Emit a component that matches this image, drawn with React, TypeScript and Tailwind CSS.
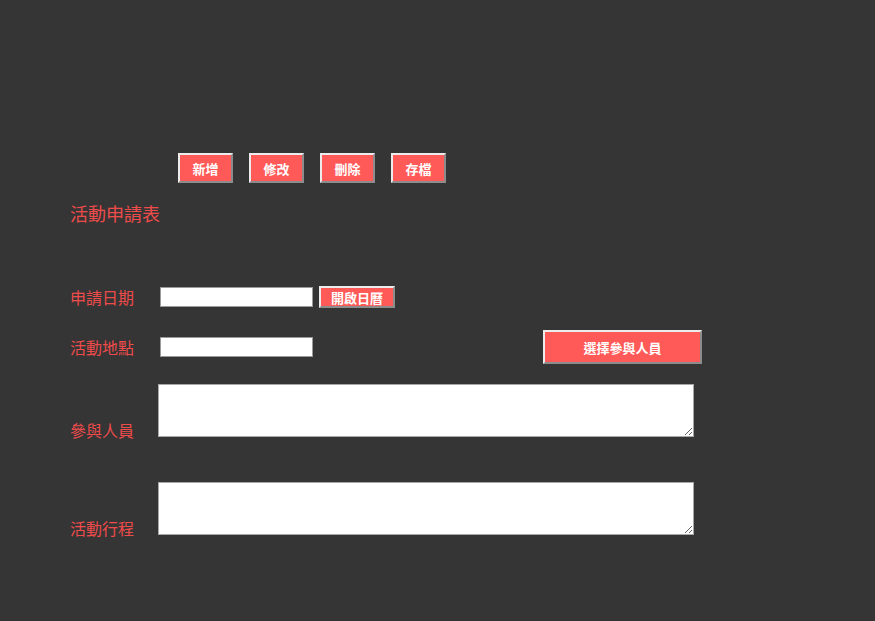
import React from "react";

const font = { fontFamily: '"Noto Sans CJK TC", "Noto Sans CJK SC", sans-serif' };

function Btn({ children, className = "" }: { children: React.ReactNode; className?: string }) {
  return (
    <button
      className={
        "bg-[#ff5a58] text-white font-bold text-[13px] leading-none border-2 border-t-[#ececec] border-l-[#ececec] border-b-[#8c8c8c] border-r-[#8c8c8c] flex items-center justify-center " +
        className
      }
    >
      {children}
    </button>
  );
}

export default function App() {
  return (
    <div className="min-h-screen w-full bg-[#353535] pl-[70px] pt-[153px] pb-[80px]" style={font}>
      <div className="flex gap-4 ml-[108px]">
        <Btn className="w-[55px] h-[30px]">新增</Btn>
        <Btn className="w-[55px] h-[30px]">修改</Btn>
        <Btn className="w-[55px] h-[30px]">刪除</Btn>
        <Btn className="w-[55px] h-[30px]">存檔</Btn>
      </div>
      <div className="mt-[18px] h-[24px] leading-[24px] text-[18px] text-[#ee4b4b]">活動申請表</div>

      <div className="mt-[61px] flex items-center h-[22px]">
        <div className="w-[90px] text-[16px] text-[#ee4b4b]">申請日期</div>
        <input className="w-[153px] h-[20px] bg-white border border-[#9a9a9a]" />
        <Btn className="ml-[6px] w-[76px] h-[22px]">開啟日曆</Btn>
      </div>

      <div className="mt-[22px] flex items-center h-[34px]">
        <div className="w-[90px] text-[16px] text-[#ee4b4b]">活動地點</div>
        <input className="w-[153px] h-[20px] bg-white border border-[#9a9a9a]" />
        <Btn className="ml-[230px] w-[159px] h-[34px]">選擇參與人員</Btn>
      </div>

      <div className="mt-[20px] flex items-end">
        <div className="w-[88px] text-[16px] leading-[20px] text-[#ee4b4b] -mb-[3px]">參與人員</div>
        <textarea className="block w-[536px] h-[53px] bg-white border border-[#a8a8a8]" />
      </div>

      <div className="mt-[45px] flex items-end">
        <div className="w-[88px] text-[16px] leading-[20px] text-[#ee4b4b] -mb-[3px]">活動行程</div>
        <textarea className="block w-[536px] h-[53px] bg-white border border-[#a8a8a8]" />
      </div>
    </div>
  );
}
